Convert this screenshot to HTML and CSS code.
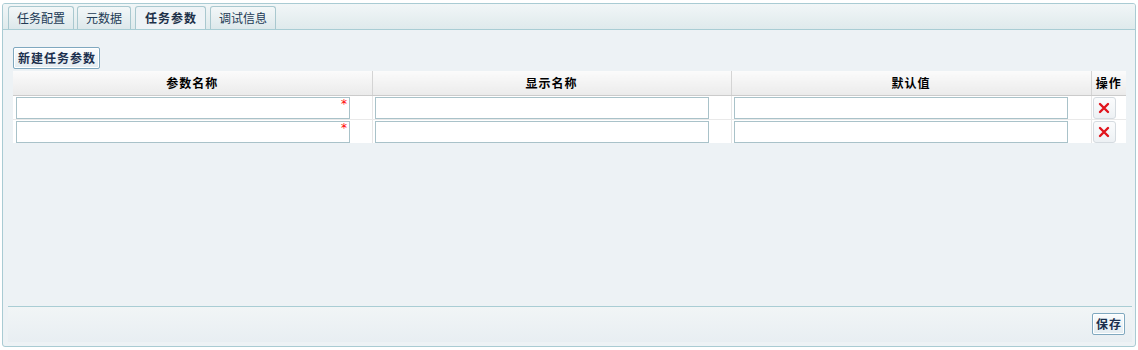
FILE: index.html
```html
<!DOCTYPE html>
<html>
<head>
<meta charset="utf-8">
<link rel="stylesheet" href="styles.css">
</head>
<body>
<div class="panel">
  <div class="tabbar">
    <div class="tab">任务配置</div>
    <div class="tab">元数据</div>
    <div class="tab active">任务参数</div>
    <div class="tab">调试信息</div>
  </div>
  <div class="wrap">
    <div class="content">
      <button class="btn">新建任务参数</button>
      <table class="grid">
        <colgroup>
          <col class="c1"><col class="c2"><col class="c3"><col class="c4">
        </colgroup>
        <thead>
          <tr><th>参数名称</th><th>显示名称</th><th>默认值</th><th>操作</th></tr>
        </thead>
        <tbody>
          <tr>
            <td><div class="field"><input type="text"><span class="req">*</span></div></td>
            <td><input type="text"></td>
            <td><input type="text"></td>
            <td><button class="del"><svg width="12" height="12" viewBox="0 0 12 12"><path d="M2 2L10 10M10 2L2 10" stroke="#e0141c" stroke-width="2.4" stroke-linecap="round"/></svg></button></td>
          </tr>
          <tr>
            <td><div class="field"><input type="text"><span class="req">*</span></div></td>
            <td><input type="text"></td>
            <td><input type="text"></td>
            <td><button class="del"><svg width="12" height="12" viewBox="0 0 12 12"><path d="M2 2L10 10M10 2L2 10" stroke="#e0141c" stroke-width="2.4" stroke-linecap="round"/></svg></button></td>
          </tr>
        </tbody>
      </table>
    </div>
    <div class="footer">
      <button class="btn save">保存</button>
    </div>
  </div>
</div>
</body>
</html>
```

FILE: styles.css
```css
* { box-sizing: border-box; }
html, body { margin: 0; padding: 0; background: #fff; }
body {
  font-family: "Noto Sans CJK SC", "Noto Sans", sans-serif;
  font-size: 12px;
  color: #000;
}
.panel {
  margin: 3px 2px 0 2px;
  height: 344px;
  border: 1px solid #a9cbd3;
  border-radius: 3px;
  background: #edf2f5;
  display: flex;
  flex-direction: column;
}
.tabbar {
  height: 26px;
  flex: none;
  display: flex;
  align-items: flex-end;
  gap: 3px;
  padding: 2px 5px 0 5px;
  background: linear-gradient(#f1f6f7, #dfeaec);
  border-bottom: 1px solid #a9cdd4;
  border-radius: 2px 2px 0 0;
}
.tab {
  height: 23px;
  padding: 0 8px;
  border: 1px solid #a9c8cf;
  border-bottom: none;
  border-radius: 3px 3px 0 0;
  background: linear-gradient(#f3f7f8, #dde8eb);
  color: #223a55;
  line-height: 21px;
  white-space: nowrap;
}
.tab.active {
  background: #eef3f6;
  font-weight: bold;
  color: #1c3048;
  padding: 0 8px 0 9px;
  letter-spacing: 1px;
  margin: 0 1px;
}
.wrap {
  flex: 1;
  display: flex;
  flex-direction: column;
  margin: 0 3px 4px 5px;
}
.content {
  flex: 1;
  padding: 17px 5px 0 5px;
}
.btn {
  display: block;
  font-family: inherit;
  font-size: 12px;
  font-weight: bold;
  letter-spacing: 1px;
  color: #1b2f4d;
  height: 22px;
  padding: 0 3px 0 4px;
  border: 1px solid #7fa8bf;
  border-radius: 2px;
  box-shadow: inset 0 0 0 1px #fff;
  background: linear-gradient(#fafcfd, #e3ecf1);
  line-height: 18px;
  cursor: pointer;
}
.grid {
  margin-top: 2px;
  width: 1113px;
  border-collapse: collapse;
  table-layout: fixed;
}
.c1 { width: 359px; }
.c2 { width: 359px; }
.c3 { width: 360px; }
.c4 { width: 35px; }
.grid th {
  height: 24px;
  font-weight: bold;
  font-size: 12px;
  letter-spacing: 1px;
  text-align: center;
  background: linear-gradient(#fbfbfb, #ebebeb);
  border-left: 1px solid #d4d4d4;
  border-bottom: 1px solid #cbcbcb;
  padding: 0;
  line-height: 16px;
}
.grid th:first-child { border-left: none; }
.grid td {
  height: 23px;
  background: #fff;
  border-left: 1px solid #e6e6e6;
  border-bottom: 1px solid #e9e9e9;
  padding: 1px 0 0 2px;
  vertical-align: top;
}
.grid td:first-child { border-left: none; padding-left: 3px; }
.grid tbody tr:last-child td { border-bottom: none; height: 24px; }
.grid input {
  display: block;
  width: 334px;
  height: 22px;
  border: 1px solid #a9c2c9;
  background: #fff;
  padding: 0 3px;
  margin: 0;
  font-family: inherit;
  font-size: 12px;
}
.field { position: relative; width: 334px; }
.req {
  position: absolute;
  right: 3px;
  top: 1px;
  color: #f00;
  font-size: 12px;
  line-height: 12px;
  font-family: "DejaVu Sans", sans-serif;
}
.grid td:last-child { padding: 1px 0 0 1px; }
.del {
  display: flex;
  align-items: center;
  justify-content: center;
  width: 23px;
  height: 22px;
  padding: 0;
  border: 1px solid #d5dbe0;
  border-radius: 3px;
  background: linear-gradient(#fbfcfd, #edf1f4);
  cursor: pointer;
}
.footer {
  flex: none;
  height: 36px;
  border-top: 1px solid #a9cdd4;
  background: linear-gradient(#f1f5f6, #e8eef2);
  display: flex;
  justify-content: flex-end;
  align-items: flex-start;
  padding: 6px 7px 0 0;
}
.save { padding: 0 2px 0 3px; }
```
